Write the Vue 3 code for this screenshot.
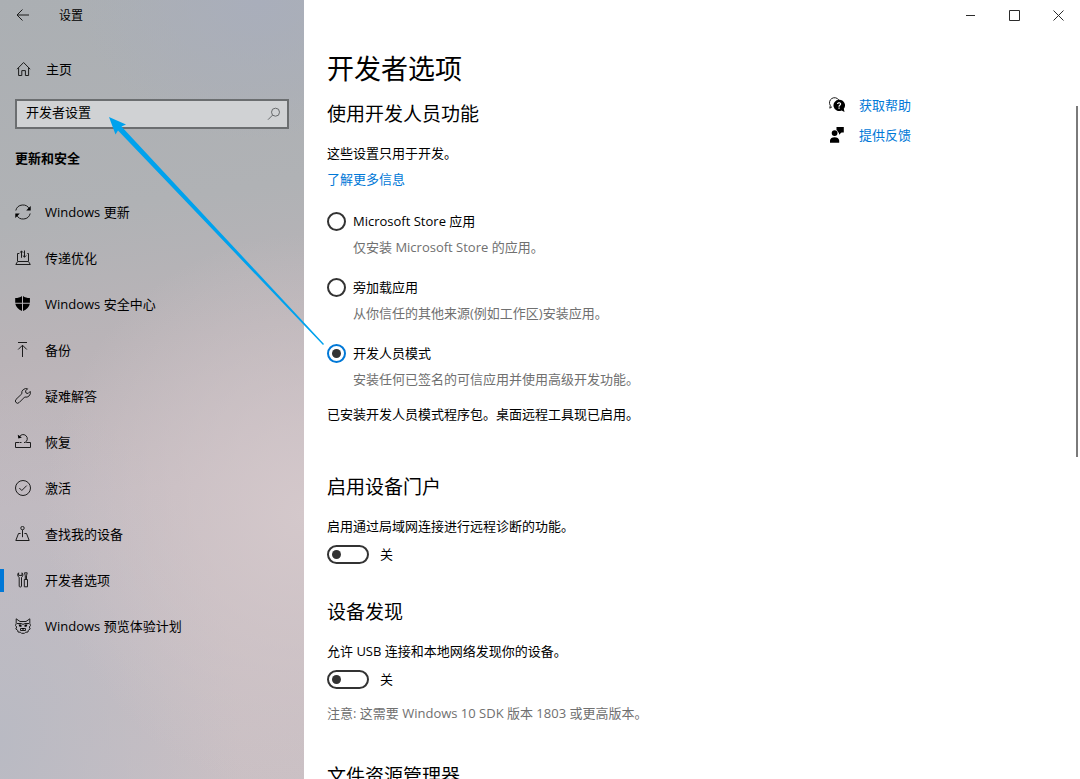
<template>
  <div class="window">
    <aside class="sidebar">
      <header class="titleBar">
        <button class="backButton" type="button" aria-label="返回">
          <svg class="icon" viewBox="0 0 16 16">
            <path d="M14 8H2.500M7.500 2.500 2 8l5.500 5.500" />
          </svg>
        </button>
        <span class="appTitle">设置</span>
      </header>

      <a class="homeLink" href="#home">
        <svg class="icon" viewBox="0 0 16 16">
          <path d="M2 8.200 8.600 1.500 15.200 8.200M3.600 6.800V14.500H6.800V9.600H10.400V14.500H13.600V6.800" />
        </svg>
        <span>主页</span>
      </a>

      <label class="search">
        <input v-model="query" class="searchInput" type="text" aria-label="查找设置" />
        <svg class="searchIcon" viewBox="0 0 14 14">
          <circle cx="8.500" cy="5.200" r="4" />
          <path d="M5.600 8.100 1 12.700" />
        </svg>
      </label>

      <h2 class="groupTitle">更新和安全</h2>

      <nav class="nav">
        <a
          v-for="item in navItems"
          :key="item.id"
          class="navItem"
          :class="{ active: item.id === current }"
          :href="`#${item.id}`"
          @click.prevent="current = item.id"
        >
          <svg class="icon" viewBox="0 0 16 16">
            <path v-if="item.line" :d="item.line" />
            <path v-if="item.solid" class="solid" :d="item.solid" />
          </svg>
          <span>{{ item.label }}</span>
        </a>
      </nav>
    </aside>

    <main class="page">
      <header class="windowButtons">
        <button class="windowButton" type="button" aria-label="最小化">
          <svg class="windowIcon" viewBox="0 0 11 11"><path d="M1 5.500h9" /></svg>
        </button>
        <button class="windowButton" type="button" aria-label="最大化">
          <svg class="windowIcon" viewBox="0 0 11 11"><path d="M.5.5h10v10H.5z" /></svg>
        </button>
        <button class="windowButton" type="button" aria-label="关闭">
          <svg class="windowIcon" viewBox="0 0 11 11"><path d="M.5.5l10 10M10.500.5l-10 10" /></svg>
        </button>
      </header>

      <div class="columns">
        <div class="content">
          <h1 class="pageTitle">开发者选项</h1>

          <section class="section">
            <h2 class="sectionTitle">使用开发人员功能</h2>
            <p class="text">这些设置只用于开发。</p>
            <a class="link" href="#more">了解更多信息</a>

            <div class="modes">
              <div v-for="m in modes" :key="m.id" class="mode">
                <label class="modeLabel">
                  <input v-model="mode" class="radio" type="radio" name="mode" :value="m.id" />
                  <span>{{ m.label }}</span>
                </label>
                <p class="modeHint">{{ m.hint }}</p>
              </div>
            </div>

            <p class="text status">已安装开发人员模式程序包。桌面远程工具现已启用。</p>
          </section>

          <section class="section portal">
            <h2 class="sectionTitle">启用设备门户</h2>
            <p class="text">启用通过局域网连接进行远程诊断的功能。</p>
            <label class="toggleRow">
              <input v-model="portalOn" class="toggle" type="checkbox" role="switch" />
              <span>{{ portalOn ? '开' : '关' }}</span>
            </label>
          </section>

          <section class="section discovery">
            <h2 class="sectionTitle">设备发现</h2>
            <p class="text">允许 USB 连接和本地网络发现你的设备。</p>
            <label class="toggleRow">
              <input v-model="discoveryOn" class="toggle" type="checkbox" role="switch" />
              <span>{{ discoveryOn ? '开' : '关' }}</span>
            </label>
            <p class="note">注意: 这需要 Windows 10 SDK 版本 1803 或更高版本。</p>
          </section>

          <section class="section explorer">
            <h2 class="sectionTitle">文件资源管理器</h2>
          </section>
        </div>

        <div class="help">
          <a class="helpLink" href="#help">
            <svg class="icon" viewBox="0 0 16 16">
              <path d="M3 9.800.8 11.200 1.300 8.500A5 5 0 1 1 9.800 3" />
              <path
                class="solid"
                fill-rule="evenodd"
                d="M10 2.800a5.600 5.600 0 1 0 2.600 10.600L15.500 15l-.7-3.200A5.600 5.600 0 0 0 10 2.800zM8 7C8 4.500 12.200 4.500 12.200 7c0 1.400-1.600 1.500-1.600 2.800H9.400C9.400 8 11 8 11 7c0-1.100-1.800-1.100-1.800 0zM9.400 10.600h1.300v1.200H9.400z"
              />
            </svg>
            <span>获取帮助</span>
          </a>
          <a class="helpLink" href="#feedback">
            <svg class="icon" viewBox="0 0 16 16">
              <path
                class="solid"
                d="M7.500 0h7.300v5.500h-2.300L10 7.700V5.500H9A3.200 3.200 0 0 0 7.500 3zM5.600 3.200a2.900 2.900 0 1 1 0 5.800 2.900 2.900 0 0 1 0-5.800zM1 15.700V13.500C1 9 10.200 9 10.200 13.500v2.200z"
              />
            </svg>
            <span>提供反馈</span>
          </a>
        </div>
      </div>

      <div class="scrollThumb"></div>
    </main>

    <!-- Pointer from the selected mode to the search box -->
    <svg class="pointer" viewBox="0 0 330 350">
      <path d="M109 117 126 124.500 121.500 126.500 324 344 323 345 118 130.500 115.500 134.500z" />
    </svg>
  </div>
</template>

<script setup>
import { ref } from 'vue';

const query = ref('开发者设置');
const current = ref('developers');
const mode = ref('developer');
const portalOn = ref(false);
const discoveryOn = ref(false);

const navItems = [
  {
    id: 'update',
    label: 'Windows 更新',
    line: 'M.8 6.500A7.300 7.300 0 0 1 14.500 5.200M15.200 9.500A7.300 7.300 0 0 1 1.500 10.800',
    solid: 'M15.700 2v4.500h-4.500zM.3 14V9.500h4.500z',
  },
  {
    id: 'delivery',
    label: '传递优化',
    line: 'M4.300 3.500H2.500V11M12.300 3.500H13.500V11M2.600 11.500H13.500L15.300 14.500H.8zM6.500 7.800V1M4.800 2.700 6.500 1 8.200 2.700M9.500 .5V7.200M7.800 5.500 9.500 7.200 11.200 5.500',
  },
  {
    id: 'security',
    label: 'Windows 安全中心',
    solid: 'M7 0V6.700H.2V2C3 2 5.200 1.400 7 0zM8 0C9.800 1.400 12 2 14.900 2V6.700H8zM.3 7.700H7V15C3.500 13.500.9 11 .3 7.700zM14.800 7.700H8V15C11.700 13.500 14.200 11 14.800 7.700z',
  },
  {
    id: 'backup',
    label: '备份',
    line: 'M3 .5H12M7.500 15V3.200M3.200 7.500 7.500 3.200 11.800 7.500',
  },
  {
    id: 'troubleshoot',
    label: '疑难解答',
    line: 'M12.600.8 10.500 2.900 11 5 13.100 5.500 15.200 3.400A4.400 4.400 0 0 1 9.700 9L4.200 14.500A2.200 2.200 0 0 1 1 11.400L6.800 5.800A4.400 4.400 0 0 1 12.600.8z',
  },
  {
    id: 'recovery',
    label: '恢复',
    line: 'M4.500 8.500H.5V13.500H15.500V8.500H11.200M5 8.500H6.500M9 8.500H10A4.200 4.200 0 1 0 4.200 3.200',
    solid: 'M2.800.8 3.300 4.600 6.900 3.600z',
  },
  {
    id: 'activation',
    label: '激活',
    line: 'M8 .5A7.500 7.500 0 1 1 8 15.500A7.500 7.500 0 1 1 8 .5zM4.300 8 6.800 10.500 11.700 5.600',
  },
  {
    id: 'findmydevice',
    label: '查找我的设备',
    line: 'M5.600 7.500H3.500L.8 14.500H14.200L11.500 7.500H9.400M7.500 3.800V11.200M7.500.4A1.700 1.700 0 1 1 7.500 3.800A1.700 1.700 0 1 1 7.500.4z',
  },
  {
    id: 'developers',
    label: '开发者选项',
    line: 'M3.600.8C2.300 1.600 2.400 4.800 4.200 5.300V14.200C4.200 15.300 6.500 15.300 6.500 14.200V5.300C8.200 4.800 8.300 1.600 7 .8V3.400H3.600zM9.500.8H12.200L11.500 3.800V7.500H10.300V3.800zM9.300 7.500H12.500V14.800H9.300z',
  },
  {
    id: 'insider',
    label: 'Windows 预览体验计划',
    line: 'M1.200.8V5.500L.5 7.500 1.700 9 .8 11 2.700 12.300 3 14 5.500 14.300 6.500 15.300H9.500L10.500 14.300 13 14 13.300 12.300 15.200 11 14.300 9 15.500 7.500 14.800 5.500V.8L11 3.500H5zM2 5.500H6.500L8 6.500 9.500 5.500H14M5.500 10.500H10.500V12.500H5.500z',
    solid: 'M3.500 6.500H6.500V8.700H4.500zM9.500 6.500H12.500L11.500 8.700H9.500zM7 10H9V11.500H7z',
  },
];

const modes = [
  { id: 'store', label: 'Microsoft Store 应用', hint: '仅安装 Microsoft Store 的应用。' },
  { id: 'sideload', label: '旁加载应用', hint: '从你信任的其他来源(例如工作区)安装应用。' },
  { id: 'developer', label: '开发人员模式', hint: '安装任何已签名的可信应用并使用高级开发功能。' },
];
</script>

<style>
body {
  margin: 0;
}
</style>

<style scoped>
.window {
  position: relative;
  display: flex;
  height: 100vh;
  overflow: hidden;
  background: #ffffff;
  color: #000000;
  font-family: 'Open Sans', 'Noto Sans CJK SC', sans-serif;
  font-size: 13px;
  line-height: 20px;
}

h1,
h2,
p {
  margin: 0;
  font-weight: 400;
}

a {
  color: inherit;
  text-decoration: none;
}

button {
  display: flex;
  align-items: center;
  justify-content: center;
  padding: 0;
  border: 0;
  background: transparent;
  color: inherit;
}

.icon {
  flex: none;
  width: 16px;
  height: 16px;
  fill: none;
  stroke: #1c1c1c;
}

.solid {
  fill: #000000;
  stroke: none;
}

.sidebar {
  flex: 0 0 304px;
  background:
    radial-gradient(ellipse 260px 280px at 100% 66%, #d4c8cb 0%, rgba(212, 200, 203, 0) 100%),
    radial-gradient(ellipse 240px 360px at 0% 95%, #b9bac3 0%, rgba(185, 186, 195, 0) 100%),
    radial-gradient(ellipse 180px 140px at 85% 0%, #a9aebb 0%, rgba(169, 174, 187, 0) 100%),
    linear-gradient(172deg, #abafb3 0%, #b0b2b5 27%, #bab4b8 44%, #c4babf 62%, #cac0c4 100%);
}

.titleBar {
  display: flex;
  align-items: center;
  height: 30px;
  padding-left: 15px;
  gap: 28px;
}

.backButton {
  width: 16px;
  height: 30px;
}

.appTitle {
  padding-top: 2px;
  font-size: 12px;
}

.homeLink {
  display: flex;
  align-items: center;
  gap: 15px;
  height: 40px;
  margin-top: 19px;
  padding-left: 15px;
}

.search {
  display: flex;
  align-items: center;
  height: 30px;
  margin: 10px 15px 0;
  padding: 0 6px 0 9px;
  border: 2px solid #6b6e70;
  box-sizing: border-box;
  background: #d0d2d4;
}

.searchInput {
  flex: 1;
  min-width: 0;
  padding: 0 0 4px;
  border: 0;
  outline: 0;
  background: transparent;
  color: inherit;
  font: inherit;
}

.searchIcon {
  flex: none;
  width: 14px;
  height: 14px;
  fill: none;
  stroke: #66696b;
}

.groupTitle {
  margin: 19px 15px 0;
  font-size: 13px;
  font-weight: 700;
}

.nav {
  display: flex;
  flex-direction: column;
  margin-top: 21px;
}

.navItem {
  display: flex;
  align-items: center;
  gap: 14px;
  height: 46px;
  padding-left: 15px;
}

.navItem.active {
  background: linear-gradient(#0078d7, #0078d7) left center / 4px 23px no-repeat;
}

.page {
  position: relative;
  flex: 1;
  min-width: 0;
}

.windowButtons {
  display: flex;
  justify-content: flex-end;
  height: 30px;
}

.windowButton {
  width: 44px;
}

.windowIcon {
  width: 11px;
  height: 11px;
  fill: none;
  stroke: #2b2b2b;
}

.columns {
  display: flex;
  padding-top: 19px;
  padding-left: 23px;
}

.content {
  flex: 1;
  min-width: 0;
}

.pageTitle {
  font-size: 27px;
  line-height: 40px;
}

.section {
  display: flex;
  flex-direction: column;
  align-items: flex-start;
  margin-top: 11px;
}

.sectionTitle {
  margin-bottom: 15px;
  font-size: 19px;
  line-height: 28px;
}

.link {
  margin-top: 6px;
  color: #0078d7;
}

.modes {
  display: flex;
  flex-direction: column;
  gap: 20px;
  margin-top: 22px;
}

.modeLabel {
  display: flex;
  align-items: center;
  gap: 7px;
}

.modeHint {
  margin-top: 6px;
  padding-left: 26px;
  color: #707070;
}

.radio {
  display: grid;
  place-items: center;
  width: 19px;
  height: 19px;
  margin: 0;
  border: 2px solid #333333;
  border-radius: 50%;
  appearance: none;
}

.radio:checked {
  border-color: #0078d7;
}

.radio:checked::before {
  width: 9px;
  height: 9px;
  border-radius: 50%;
  background: #333333;
  content: '';
}

.status {
  margin-top: 15px;
}

.portal {
  margin-top: 49px;
}

.toggleRow {
  display: flex;
  align-items: center;
  gap: 11px;
  margin-top: 8px;
}

.toggle {
  display: flex;
  align-items: center;
  width: 42px;
  height: 19px;
  margin: 0;
  padding: 0 3px;
  border: 2px solid #333333;
  border-radius: 10px;
  box-sizing: border-box;
  appearance: none;
}

.toggle::before {
  width: 9px;
  height: 9px;
  border-radius: 50%;
  background: #333333;
  content: '';
}

.toggle:checked {
  justify-content: flex-end;
  border-color: #0078d7;
  background: #0078d7;
}

.toggle:checked::before {
  background: #ffffff;
}

.discovery {
  margin-top: 34px;
}

.note {
  margin-top: 14px;
  color: #707070;
}

.explorer {
  margin-top: 39px;
}

.help {
  flex: 0 0 251px;
  padding-top: 41px;
}

.helpLink {
  display: flex;
  align-items: center;
  gap: 14px;
  height: 30px;
  color: #0078d7;
}

.scrollThumb {
  position: absolute;
  top: 106px;
  right: 2px;
  width: 2px;
  height: 45%;
  background: #7a7a7a;
}

.pointer {
  position: absolute;
  top: 0;
  left: 0;
  width: 330px;
  height: 350px;
  fill: #00a2ed;
  pointer-events: none;
}
</style>
